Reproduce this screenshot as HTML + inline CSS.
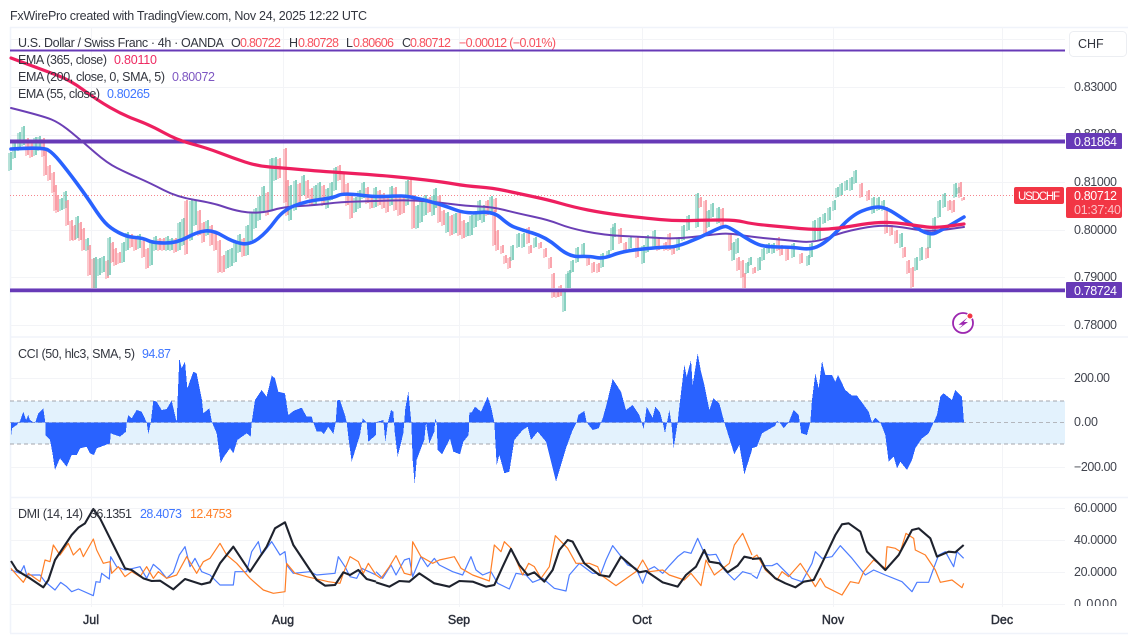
<!DOCTYPE html>
<html><head><meta charset="utf-8"><title>USDCHF</title>
<style>
html,body{margin:0;padding:0;background:#fff;width:1128px;height:637px;overflow:hidden}
svg{display:block;filter:blur(.35px)}
text{font-family:"Liberation Sans",sans-serif;font-size:12.5px;fill:#33363f}
.r{fill:#f7525f}
.w{fill:#fff}
.ax{fill:#41444e}
.d{fill:#2a2e39;stroke:#2a2e39;stroke-width:.4}
</style></head><body>
<svg width="1128" height="637" viewBox="0 0 1128 637" xmlns="http://www.w3.org/2000/svg">
<rect width="1128" height="637" fill="#fff"/>
<!-- frame -->
<path d="M10 27.5H1128M10.5 27V633M10 633.5H1128M10 337H1128M10 497.5H1128" stroke="#f0f3fa" stroke-width="1.6" fill="none"/>
<!-- grid -->
<path d="M10 39.5H1065M10 87.5H1065M10 135.5H1065M10 182.5H1065M10 230.5H1065M10 277.5H1065M10 325.5H1065M10 378.5H1065M10 467.5H1065M10 508.5H1065M10 540.5H1065M10 572.5H1065M10 604.5H1065M91.5 27V607M283.5 27V607M459.5 27V607M642.5 27V607M833.5 27V607M1002.5 27V607" stroke="#f3f4f7" stroke-width="1" fill="none"/>
<!-- CCI band -->
<rect x="10" y="401" width="1055" height="43" fill="#e3f2fd"/>
<path d="M10 401H1065M10 444H1065" stroke="#a3a6ad" stroke-width="1" stroke-dasharray="4 3" fill="none"/>
<path d="M10 422.5H1065" stroke="#b4b7bd" stroke-width="1" stroke-dasharray="4 3" fill="none"/>
<!-- CCI -->
<g fill="#2962ff" shape-rendering="crispEdges">
<polygon transform="translate(0,335) scale(.33333)" points="33,262 33,305 36,280 50,270 60,258 70,230 78,255 85,240 90,255 105,265 115,235 130,220 136,262 136,300 150,315 157,352 165,405 180,370 200,395 215,360 230,360 240,340 260,335 270,355 282,360 290,340 330,325 332,295 360,305 378,290 380,262 385,240 395,250 410,225 425,230 440,262 445,297 452,265 460,197 470,200 485,225 500,222 515,197 530,262 538,70 545,100 555,80 562,160 580,110 590,115 605,190 610,235 628,220 636,262 650,295 662,385 672,365 690,340 700,355 712,315 740,295 752,305 755,262 765,195 785,165 800,185 815,122 825,130 835,170 855,175 865,240 880,228 905,218 920,245 935,245 940,262 950,290 965,290 972,297 985,275 1000,297 1007,262 1012,195 1020,195 1035,240 1040,262 1045,305 1055,380 1080,300 1088,250 1100,262 1105,320 1128,300 1128,262"/>
<polygon transform="translate(376,335) scale(.33333)" points="0,262 5,260 22,255 28,320 36,262 45,225 52,230 56,290 65,365 82,295 88,220 97,170 106,262 110,375 116,447 122,375 135,340 145,315 150,262 160,325 175,290 178,250 182,262 185,345 198,358 222,310 232,350 252,358 262,320 278,300 280,232 287,232 297,215 315,230 335,185 345,215 355,262 362,390 370,360 385,415 400,410 415,315 440,285 455,275 465,315 485,290 510,320 540,440 570,340 590,285 602,262 607,240 625,228 632,262 650,285 668,280 680,250 690,215 710,132 735,170 750,225 770,210 790,240 797,262 803,282 812,215 830,248 838,215 852,232 860,262 867,295 880,225 886,262 893,340 905,262 908,232 925,90 932,125 945,75 950,150 965,55 975,110 985,150 1000,225 1012,190 1030,205 1045,262 1075,358 1090,330 1105,418 1128,345 1128,262"/>
<polygon transform="translate(752,335) scale(.33333)" points="0,262 0,340 15,335 30,295 70,272 75,258 85,265 95,280 110,262 125,225 140,240 148,295 165,300 175,262 180,195 190,115 200,160 210,78 220,120 240,120 250,140 258,120 280,165 300,182 315,182 350,230 360,262 370,248 385,262 400,300 410,380 425,365 435,400 445,380 465,405 480,375 490,340 510,310 530,295 545,262 555,240 565,185 575,175 600,195 610,165 630,185 636,262"/>
</g>
<!-- current price dotted -->
<path d="M10 195.5H1014" stroke="#f6848c" stroke-width="1" stroke-dasharray="1 2" fill="none"/>
<!-- candles -->
<g id="cn">
<path stroke="#6cc6b2" stroke-width="1.6" fill="none" d="M11 152V170M15 142V158M20 132V150M24 126V145M36 137V155M40 136V150M62 198V210M66 191V208M78 216V238M88 238V250M96 257V288M100 258V275M104 256V272M110 237V275M124 242V262M128 232V250M140 234V248M152 240V265M156 236V250M168 236V250M172 238V250M180 222V250M184 218V245M192 200V240M196 200V225M208 220V235M228 250V268M232 248V266M236 242V262M240 234V252M248 225V255M252 212V240M256 208V228M260 196V220M264 186V212M272 158V210M276 157V180M291 185V220M296 180V210M304 175V195M316 185V205M320 182V200M328 188V208M332 182V200M336 167V190M356 197V212M360 190V208M364 182V198M376 187V207M392 186V205M408 180V205M418 205V228M422 200V222M426 195V215M434 195V215M436 188V208M448 212V232M456 213V233M468 222V236M472 215V235M476 212V227M480 200V220M484 205V222M492 196V212M513 245V260M519 233V247M524 233V247M536 237V247M565 290V311M568 273V290M570 270V289M573 260V272M578 247V262M584 243V257M603 253V267M609 250V255M613 227V250M615 223V237M631 237V248M644 245V263M648 235V252M655 230V247M679 237V250M684 225V240M689 215V230M698 193V227M709 210V227M713 203V217M719 207V223M734 242V260M738 238V253M748 262V273M751 257V265M760 257V270M764 248V260M769 243V253M774 243V253M794 243V257M809 255V265M812 243V257M815 220V240M820 217V240M825 213V223M830 207V220M835 200V210M838 187V197M842 183V195M847 180V190M852 177V190M856 170V183M874 197V213M879 197V210M884 200V210M902 233V247M917 257V270M922 247V260M930 233V248M935 217V233M940 200V217M945 193V207M956 183V197M959 187V193"/>
<path stroke="#f98f99" stroke-width="1.6" fill="none" d="M28 138V155M32 140V157M44 138V156M46 150V175M50 165V180M54 172V192M56 185V210M58 195V212M68 200V225M72 220V240M75 225V240M81 222V240M84 228V250M90 245V275M94 258V288M108 260V278M113 242V262M116 248V265M120 252V263M132 234V247M136 238V250M144 240V257M148 248V268M160 238V250M164 238V250M176 238V252M187 200V254M200 210V235M204 222V242M212 225V245M216 232V250M220 240V272M224 255V272M244 238V256M268 192V215M280 158V178M286 148V202M288 180V215M300 183V205M308 180V198M312 188V205M324 185V205M340 165V180M344 172V195M348 183V205M352 195V218M368 187V203M372 195V208M380 190V205M384 193V208M388 195V212M396 187V210M400 195V215M404 197V213M411 180V198M414 195V228M430 197V212M440 195V222M444 210V225M452 215V235M460 212V235M464 220V238M488 200V215M496 198V212M495 210V245M498 230V250M503 245V253M506 255V263M510 257V268M529 227V243M531 245V253M541 242V248M546 248V257M551 257V268M554 273V297M558 290V297M561 285V296M589 257V265M594 262V272M599 263V272M621 228V243M626 242V250M638 237V257M659 238V250M666 242V250M670 233V250M674 247V254M701 197V207M706 200V233M723 208V228M731 233V250M739 257V270M743 260V277M745 273V290M755 267V273M779 237V250M782 245V255M788 247V260M802 253V263M862 183V197M869 190V200M887 207V233M892 225V235M897 230V243M905 247V257M909 260V273M913 267V287M928 247V258M950 200V210M954 200V212M961 182V197M964 197V200"/>
</g>
<use href="#cn" transform="translate(-2,1)" opacity=".6"/>
<!-- support/resistance -->
<path d="M10 288.5H1065" stroke="#c5b3e6" stroke-width="1" fill="none"/>
<path d="M10 50.5H1065" stroke="#673ab7" stroke-width="2" fill="none"/>
<path d="M10 141.5H1065" stroke="#673ab7" stroke-width="4" fill="none"/>
<path d="M10 290.5H1065" stroke="#673ab7" stroke-width="3.6" fill="none"/>
<!-- EMA 200 -->
<path fill="none" stroke="#6b3fb5" stroke-width="2" stroke-linecap="round" d="M11 108Q43 116 51.5 119.5Q60 123 71.5 132.5Q83 142 95 152.5Q107 163 117 168Q127 173 138.5 178Q150 183 163.5 190Q177 197 195 200Q213 203 223 206.5Q233 210 241.5 211.5Q250 213 258.5 212.5Q267 212 275 209.5Q283 207 300 206Q317 205 328.5 203.5Q340 202 358 201.5Q376 201 392.5 200.5Q409 200 422.5 201Q436 202 451 204Q466 206 479.5 206.5Q493 207 504.5 210Q516 213 532.5 216.5Q549 220 559 224Q569 228 586 231.5Q603 235 623 236Q643 237 659.5 238Q676 239 692.5 237Q709 235 719 234Q729 233 740.5 235Q752 237 768.5 238.5Q785 240 800 241.5Q815 243 828.5 237.5Q842 232 860.5 228.5Q879 225 890.5 226Q902 227 915.5 229.5Q929 232 946.5 229.5L964 227"/>
<!-- EMA 55 -->
<path fill="none" stroke="#2962ff" stroke-width="3.6" stroke-linecap="round" d="M11 149Q43 147 48 150Q53 153 60 161.5Q67 170 77 183.5Q87 197 93.5 207Q100 217 105 222.5Q110 228 118.5 232.5Q127 237 135 237.5Q143 238 148 240.5Q153 243 165 243Q177 243 187 237.5Q197 232 205 231Q213 230 223 236Q233 242 241.5 243.5Q250 245 258.5 238.5Q267 232 275 221Q283 210 295 205.5Q307 201 320 199.5Q333 198 338 195.5Q343 193 359.5 195Q376 197 384.5 196.5Q393 196 401 196Q409 196 426 200.5Q443 205 454.5 209.5Q466 214 479.5 212.5Q493 211 501 218Q509 225 514 227Q519 229 532.5 233Q546 237 557.5 247Q569 257 579 256.5Q589 256 596 257.5Q603 259 613 255Q623 251 643 249Q663 247 669.5 247Q676 247 687.5 242.5Q699 238 711 232Q723 226 726 226.5Q729 227 740.5 234.5Q752 242 758.5 244.5Q765 247 778.5 247Q792 247 802 248.5Q812 250 820.5 245Q829 240 840.5 227.5Q852 215 862 211Q872 207 878.5 207Q885 207 895 213.5Q905 220 917 228Q929 236 935.5 233Q942 230 953 223.5L964 217"/>
<!-- EMA 365 -->
<path fill="none" stroke="#ee1f5f" stroke-width="3.2" stroke-linecap="round" d="M11 58Q43 70 56.5 75Q70 80 83.5 90Q97 100 110 107.5Q123 115 136.5 120Q150 125 163.5 132.5Q177 140 192 144Q207 148 220 153Q233 158 245 162Q257 166 270 167Q283 168 300 169.5Q317 171 346.5 173Q376 175 392.5 176.5Q409 178 426 180Q443 182 454.5 184Q466 186 479.5 187Q493 188 504.5 190.5Q516 193 532.5 196.5Q549 200 561 203.5Q573 207 588 210Q603 213 623 215.5Q643 218 659.5 219.5Q676 221 692.5 220.5Q709 220 722.5 220Q736 220 744 222Q752 224 768.5 225.5Q785 227 800 228.5Q815 230 828.5 229Q842 228 855.5 225.5Q869 223 880.5 222.5Q892 222 905.5 224Q919 226 927 227Q935 228 949.5 226L964 224"/>
<!-- DMI -->
<g fill="none" stroke-linejoin="round">
<g transform="translate(0,495) scale(.33333)">
<polyline stroke="#4d7dff" stroke-width="3.6" points="33,225 60,235 72,212 80,240 120,240 135,260 165,285 182,262 200,275 215,290 235,282 280,302 288,260 300,262 305,235 328,252 332,185 350,215 375,225 400,220 420,215 440,250 460,208 480,225 500,250 520,232 538,180 555,155 570,215 585,190 605,230 630,240 660,270 700,270 705,230 740,230 755,170 775,140 785,180 815,140 840,180 855,170 860,210 880,235 930,230 950,240 1005,235 1015,185 1035,215 1050,245 1070,250 1085,220 1128,240"/>
<polyline stroke="#ff7f27" stroke-width="3.6" points="33,220 50,240 70,262 85,235 120,260 135,195 150,200 160,150 180,180 205,145 220,180 240,160 250,185 270,150 280,132 290,165 310,205 330,200 335,235 355,215 375,245 395,230 420,245 440,215 460,250 475,230 500,250 530,240 560,185 590,235 610,200 630,190 660,145 680,180 710,205 750,250 790,285 820,295 855,290 860,205 885,235 920,245 985,260 1020,265 1030,235 1050,185 1075,200 1090,235 1105,205 1128,240"/>
<polyline stroke="#1e222d" stroke-width="6.3" points="33,198 50,225 70,238 90,250 130,277 145,255 165,195 185,165 215,120 235,98 255,85 280,42 300,70 330,130 355,180 375,220 395,225 430,250 455,258 480,257 520,283 555,252 605,268 630,262 660,205 700,155 750,230 800,155 825,100 855,82 880,150 920,210 950,255 975,272 1005,270 1030,232 1050,240 1075,225 1100,252 1128,260"/>
</g>
<g transform="translate(376,495) scale(.33333)">
<polyline stroke="#4d7dff" stroke-width="3.6" points="0,230 20,250 45,210 60,240 85,195 100,190 110,245 135,185 155,215 175,190 190,210 230,230 260,240 285,185 300,225 320,240 345,230 365,265 400,282 420,235 450,240 470,262 500,250 535,280 570,288 580,240 610,205 650,235 675,235 690,195 710,152 755,210 780,220 800,265 815,225 835,215 860,235 880,212 905,185 925,170 945,175 965,130 985,175 1000,180 1020,178 1045,225 1075,255 1100,230 1128,238"/>
<polyline stroke="#ff7f27" stroke-width="3.6" points="0,240 15,250 40,215 60,182 85,235 105,240 110,140 135,185 170,205 190,195 235,185 255,220 290,240 340,258 355,150 375,170 385,140 405,160 440,240 458,205 475,215 495,250 520,215 538,122 575,160 600,205 640,205 665,215 675,240 720,272 780,230 800,195 820,230 860,225 880,240 925,255 945,235 975,272 990,195 1015,240 1060,205 1075,150 1100,115 1128,180"/>
<polyline stroke="#1e222d" stroke-width="6.3" points="0,262 40,275 70,258 100,260 130,235 175,265 220,275 250,258 290,260 330,275 355,270 380,215 405,162 430,210 455,240 475,232 505,260 530,225 550,165 575,135 590,140 625,205 670,240 700,245 735,185 770,215 790,232 810,228 860,262 905,275 930,240 960,215 985,165 1000,200 1030,205 1055,232 1085,212 1105,185 1128,190"/>
</g>
<g transform="translate(752,495) scale(.33333)">
<polyline stroke="#4d7dff" stroke-width="3.6" points="0,240 15,250 30,212 60,212 75,205 120,250 150,260 180,205 190,170 210,190 240,185 265,152 300,190 340,240 365,225 400,240 450,260 480,290 495,262 530,262 545,220 560,180 580,170 605,215 615,170 635,190"/>
<polyline stroke="#ff7f27" stroke-width="3.6" points="0,190 15,180 40,225 75,255 90,230 110,245 145,205 175,250 190,275 205,250 220,275 270,300 295,260 320,265 335,230 365,195 400,220 405,155 430,160 445,170 462,115 485,130 490,165 520,180 550,225 565,262 600,255 630,278 635,265"/>
<polyline stroke="#1e222d" stroke-width="6.3" points="0,192 25,190 40,220 70,250 100,265 130,277 155,260 185,255 205,215 250,120 270,88 290,85 325,110 345,170 400,225 440,180 480,105 500,100 535,130 555,185 590,170 610,172 635,150"/>
</g>
</g>
<!-- energy icon -->
<circle cx="963" cy="323" r="10" fill="#fff" stroke="#9c27b0" stroke-width="1.8"/>
<path d="M967.500 317.500L958.500 324.800H962.800L958.500 329L968 322H963.800Z" fill="#9c27b0"/>
<circle cx="970" cy="316" r="3" fill="#f23645" stroke="#fff" stroke-width="1"/>
<!-- title -->
<text x="10" y="20" textLength="357" lengthAdjust="spacing">FxWirePro created with TradingView.com, Nov 24, 2025 12:22 UTC</text>
<!-- legend -->
<text x="18" y="47" textLength="206" lengthAdjust="spacing">U.S. Dollar / Swiss Franc · 4h · OANDA</text>
<text x="231" y="47">O</text><text x="240" y="47" class="r" textLength="41" lengthAdjust="spacing">0.80722</text>
<text x="289" y="47">H</text><text x="298" y="47" class="r" textLength="41" lengthAdjust="spacing">0.80728</text>
<text x="346" y="47">L</text><text x="353" y="47" class="r" textLength="41" lengthAdjust="spacing">0.80606</text>
<text x="402" y="47">C</text><text x="410" y="47" class="r" textLength="41" lengthAdjust="spacing">0.80712</text>
<text x="459" y="47" class="r" textLength="97" lengthAdjust="spacing">−0.00012 (−0.01%)</text>
<text x="18" y="64" textLength="89" lengthAdjust="spacing">EMA (365, close)</text><text x="114" y="64" style="fill:#ee2a62" textLength="43" lengthAdjust="spacing">0.80110</text>
<text x="18" y="81" textLength="147" lengthAdjust="spacing">EMA (200, close, 0, SMA, 5)</text><text x="172" y="81" style="fill:#7e57c2" textLength="43" lengthAdjust="spacing">0.80072</text>
<text x="18" y="98" textLength="82" lengthAdjust="spacing">EMA (55, close)</text><text x="107" y="98" style="fill:#3f76ff" textLength="43" lengthAdjust="spacing">0.80265</text>
<text x="18" y="358" textLength="117" lengthAdjust="spacing">CCI (50, hlc3, SMA, 5)</text><text x="142" y="358" style="fill:#3f76ff" textLength="29" lengthAdjust="spacing">94.87</text>
<text x="18" y="518" textLength="65" lengthAdjust="spacing">DMI (14, 14)</text><text x="90" y="518" textLength="42" lengthAdjust="spacing">36.1351</text>
<text x="140" y="518" style="fill:#3f76ff" textLength="42" lengthAdjust="spacing">28.4073</text>
<text x="190" y="518" style="fill:#ff7f27" textLength="42" lengthAdjust="spacing">12.4753</text>
<!-- price axis -->
<rect x="1069.500" y="31.500" width="57" height="25" rx="4" fill="#fff" stroke="#eceef2"/>
<text x="1078" y="48">CHF</text>
<text x="1074" y="91" class="ax" textLength="43" lengthAdjust="spacing">0.83000</text>
<text x="1074" y="138" class="ax" textLength="43" lengthAdjust="spacing">0.82000</text>
<text x="1074" y="186" class="ax" textLength="43" lengthAdjust="spacing">0.81000</text>
<text x="1074" y="234" class="ax" textLength="43" lengthAdjust="spacing">0.80000</text>
<text x="1074" y="281" class="ax" textLength="43" lengthAdjust="spacing">0.79000</text>
<text x="1074" y="329" class="ax" textLength="43" lengthAdjust="spacing">0.78000</text>
<rect x="1066" y="133" width="56" height="16" rx="1" fill="#673ab7"/>
<text x="1074" y="146" class="w" textLength="43" lengthAdjust="spacing">0.81864</text>
<rect x="1066" y="282" width="56" height="16" rx="1" fill="#673ab7"/>
<text x="1074" y="295" class="w" textLength="43" lengthAdjust="spacing">0.78724</text>
<rect x="1014" y="187" width="50" height="17" rx="2" fill="#f23645"/>
<text x="1018" y="200" class="w" style="font-size:11.5px" textLength="42" lengthAdjust="spacing">USDCHF</text>
<rect x="1066" y="187" width="56" height="31" rx="2" fill="#f23645"/>
<text x="1074" y="200" class="w" textLength="43" lengthAdjust="spacing">0.80712</text>
<text x="1074" y="214" style="fill:#fcc0c5" textLength="47" lengthAdjust="spacing">01:37:40</text>
<text x="1074" y="382" class="ax" textLength="36" lengthAdjust="spacing">200.00</text>
<text x="1074" y="426" class="ax" textLength="24" lengthAdjust="spacing">0.00</text>
<text x="1074" y="471" class="ax" textLength="43" lengthAdjust="spacing">−200.00</text>
<text x="1074" y="512" class="ax" textLength="43" lengthAdjust="spacing">60.0000</text>
<text x="1074" y="544" class="ax" textLength="43" lengthAdjust="spacing">40.0000</text>
<text x="1074" y="576" class="ax" textLength="43" lengthAdjust="spacing">20.0000</text>
<text x="1074" y="608" class="ax" textLength="43" lengthAdjust="spacing">0.0000</text>
<rect x="1065" y="606" width="63" height="26" fill="#fff"/>
<!-- time axis -->
<text x="91" y="624" class="d" text-anchor="middle">Jul</text>
<text x="283" y="624" class="d" text-anchor="middle">Aug</text>
<text x="459" y="624" class="d" text-anchor="middle">Sep</text>
<text x="642" y="624" class="d" text-anchor="middle">Oct</text>
<text x="833" y="624" class="d" text-anchor="middle">Nov</text>
<text x="1002" y="624" class="d" text-anchor="middle">Dec</text>
</svg>
</body></html>
